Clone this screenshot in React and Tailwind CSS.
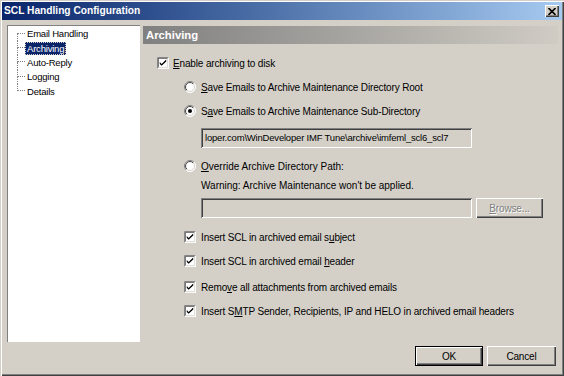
import { useId } from 'react'

function CheckBox({ checked = true }) {
  return (
    <svg width="12" height="12" viewBox="0 0 13 13" className="shrink-0">
      <rect x="0" y="0" width="13" height="13" fill="#ffffff" />
      <path d="M0.5 12.5V0.5H12.5" stroke="#808080" fill="none" />
      <path d="M1.5 11.5V1.5H11.5" stroke="#404040" fill="none" />
      <path d="M1.5 11.5H11.5V1.5" stroke="#d4d0c8" fill="none" />
      <rect x="2" y="2" width="9" height="9" fill="#ffffff" />
      {checked && <path d="M3 5.5L5 7.5L10 2.8V4.8L5 9.5L3 7.5Z" fill="#000000" />}
    </svg>
  )
}

function Radio({ checked = false }) {
  const id = useId().replace(/:/g, '')
  return (
    <svg width="12" height="12" viewBox="0 0 12 12" className="shrink-0">
      <defs>
        <linearGradient id={`o${id}`} x1="0" y1="0" x2="1" y2="1">
          <stop offset="0.45" stopColor="#808080" />
          <stop offset="0.55" stopColor="#ffffff" />
        </linearGradient>
        <linearGradient id={`i${id}`} x1="0" y1="0" x2="1" y2="1">
          <stop offset="0.45" stopColor="#404040" />
          <stop offset="0.55" stopColor="#d4d0c8" />
        </linearGradient>
      </defs>
      <circle cx="6" cy="6" r="5.5" fill="#ffffff" stroke={`url(#o${id})`} />
      <circle cx="6" cy="6" r="4.5" fill="#ffffff" stroke={`url(#i${id})`} />
      {checked && <circle cx="6" cy="6" r="2" fill="#000000" />}
    </svg>
  )
}

function TitleBar() {
  return (
    <div className="h-[18px] flex items-center justify-between bg-linear-to-r from-[#0a246a] to-[#a6caf0]">
      <span className="pl-[2px] text-white font-bold text-[10.2px] tracking-normal">SCL Handling Configuration</span>
      <div className="mr-[3px] w-[14px] h-[12px] bg-[#d4d0c8] flex items-center justify-center shadow-[inset_1px_1px_#ffffff,inset_-1px_-1px_#404040,inset_-2px_-2px_#808080]">
        <svg width="8" height="7" viewBox="0 0 8 7">
          <path d="M0.5 0L7.5 7M7.5 0L0.5 7" stroke="#000000" strokeWidth="1.6" />
        </svg>
      </div>
    </div>
  )
}

const treeItems = ['Email Handling', 'Archiving', 'Auto-Reply', 'Logging', 'Details']

function Tree() {
  return (
    <div className="w-[133px] h-[317px] shrink-0 bg-white pt-[1.7px] pl-[10px] text-[9.5px] tracking-[-0.2px] shadow-[inset_1px_1px_#808080,inset_-1px_-1px_#ffffff]">
      {treeItems.map((label, i) => {
        const first = i === 0
        const last = i === treeItems.length - 1
        const selected = label === 'Archiving'
        return (
          <div key={label} className="h-[14.3px] flex items-stretch">
            <div className="w-[8px] flex flex-col shrink-0">
              <div className={`h-1/2 border-b border-dotted border-[#808080] ${first ? '' : 'border-l'}`} />
              <div className={`h-1/2 border-dotted border-[#808080] ${last ? '' : 'border-l'}`} />
            </div>
            <div className="flex items-center">
              <span
                className={`px-[2px] leading-[13px] ${selected ? 'bg-[#0a246a] text-white outline-1 outline-dotted outline-[#d4d0c8] -outline-offset-1' : ''}`}
              >
                {label}
              </span>
            </div>
          </div>
        )
      })}
    </div>
  )
}

function Row({ className = '', children }) {
  return <div className={`h-[12px] flex items-center whitespace-nowrap ${className}`}>{children}</div>
}

function TextBox({ className = '', children }) {
  return (
    <div className={`h-[20px] bg-[#d4d0c8] flex items-center pl-[4px] text-[9.5px] tracking-[-0.2px] whitespace-nowrap overflow-hidden shadow-[inset_1px_1px_#808080,inset_-1px_-1px_#ffffff,inset_2px_2px_#404040,inset_-2px_-2px_#d4d0c8] ${className}`}>
      {children}
    </div>
  )
}

const raised = 'shadow-[inset_1px_1px_#ffffff,inset_-1px_-1px_#404040,inset_-2px_-2px_#808080]'

export default function App() {
  return (
    <div className="w-[564px] h-[376px] bg-[#d4d0c8] p-[2px] flex flex-col font-['Liberation_Sans',Arial,sans-serif] text-[10px] tracking-[-0.15px] text-black shadow-[inset_1px_1px_#d4d0c8,inset_2px_2px_#ffffff,inset_-1px_-1px_#404040,inset_-2px_-2px_#808080]">
      <TitleBar />

      <div className="flex pl-[5px] pt-[5px] pr-[4px]">
        <Tree />

        <div className="ml-[3px] flex-1 flex flex-col">
          {/* Section header */}
          <div className="mt-[1px] h-[18px] flex items-center pl-[3px] bg-linear-to-r from-[#808080] to-[#d0ccc4]">
            <span className="text-white font-bold text-[11.3px] tracking-normal">Archiving</span>
          </div>

          <Row className="mt-[13px] pl-[14px] gap-[4px]">
            <CheckBox />
            <span><u>E</u>nable archiving to disk</span>
          </Row>

          <Row className="mt-[12px] pl-[41px] gap-[5px]">
            <Radio />
            <span><u>S</u>ave Emails to Archive Maintenance Directory Root</span>
          </Row>

          <Row className="mt-[12px] pl-[41px] gap-[5px]">
            <Radio checked />
            <span>S<u>a</u>ve Emails to Archive Maintenance Sub-Directory</span>
          </Row>

          <TextBox className="mt-[11px] ml-[58px] w-[271px]">
            loper.com\WinDeveloper IMF Tune\archive\imfeml_scl6_scl7
          </TextBox>

          <Row className="mt-[12px] pl-[41px] gap-[5px]">
            <Radio />
            <span className="tracking-[0px]"><u>O</u>verride Archive Directory Path:</span>
          </Row>

          <Row className="mt-[7px] pl-[58px]">
            <span className="tracking-[0px]">Warning: Archive Maintenance won't be applied.</span>
          </Row>

          <div className="mt-[7px] ml-[58px] flex gap-[4px]">
            <TextBox className="w-[271px]" />
            <div className={`w-[67px] h-[20px] flex items-center justify-center text-[#808080] [text-shadow:1px_1px_0_#ffffff] ${raised}`}>
              <span><u>B</u>rowse...</span>
            </div>
          </div>

          <Row className="mt-[13px] pl-[41px] gap-[5px]">
            <CheckBox />
            <span>Insert SCL in archived email s<u>u</u>bject</span>
          </Row>

          <Row className="mt-[12px] pl-[41px] gap-[5px]">
            <CheckBox />
            <span>Insert SCL in archived email <u>h</u>eader</span>
          </Row>

          <Row className="mt-[14px] pl-[41px] gap-[5px]">
            <CheckBox />
            <span>Remo<u>v</u>e all attachments from archived emails</span>
          </Row>

          <Row className="mt-[12px] pl-[41px] gap-[5px]">
            <CheckBox />
            <span>Insert S<u>M</u>TP Sender, Recipients, IP and HELO in archived email headers</span>
          </Row>
        </div>
      </div>

      <div className="mt-[4px] pr-[6px] flex justify-end gap-[4px]">
        <div className="w-[68px] h-[20px] border border-black">
          <div className={`w-full h-full flex items-center justify-center ${raised}`}>OK</div>
        </div>
        <div className={`w-[69px] h-[20px] flex items-center justify-center ${raised}`}>Cancel</div>
      </div>
    </div>
  )
}
